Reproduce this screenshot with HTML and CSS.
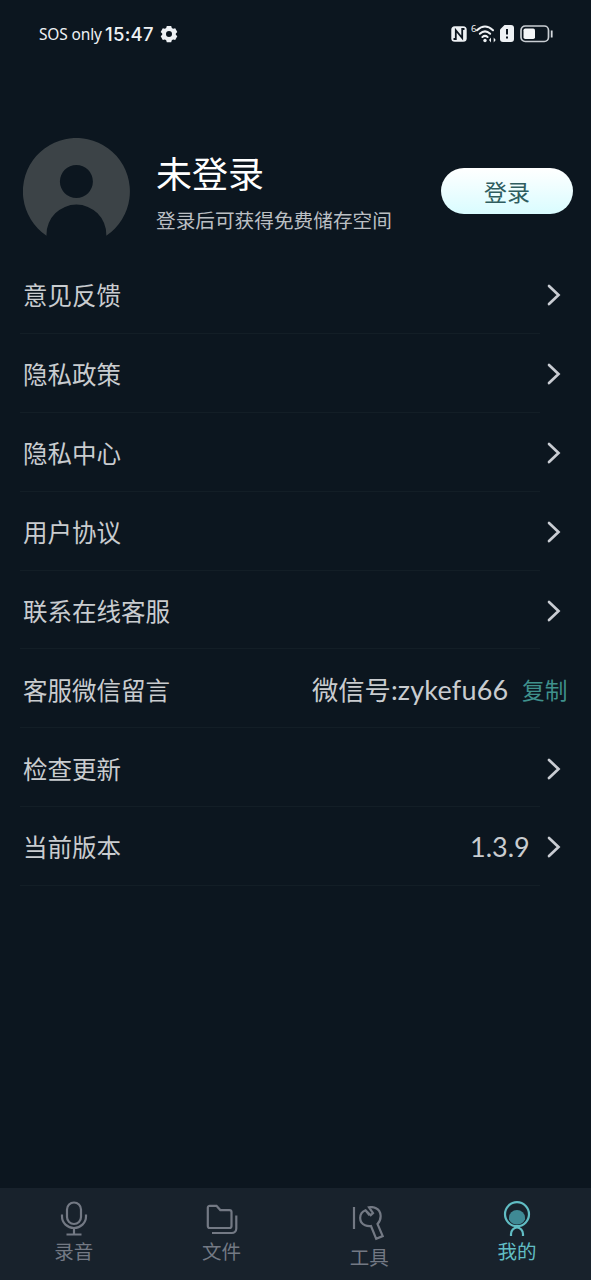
FILE: index.html
```html
<!DOCTYPE html>
<html lang="zh-CN">
<head>
<meta charset="utf-8">
<title>我的</title>
<link rel="stylesheet" href="styles.css">
</head>
<body>
<div class="app">
  <header class="status">
    <span class="carrier">SOS only</span>
    <span class="clock">15:47</span>
    <svg class="gear" width="18" height="18" viewBox="0 0 18 18"><path fill="#eef1f4" fill-rule="evenodd" d="M6.8 1h4.400l.6 2 1.300.8 2.100-.5 2.100 3.700-1.500 1.500v1.200l1.500 1.500-2.100 3.700-2.100-.5-1.300.8-.6 2H6.800l-.6-2-1.300-.8-2.100.5L.7 11.200l1.500-1.500V8.500L.7 7l2.100-3.700 2.100.5L6.200 3zM9 6a3 3 0 1 0 0 6 3 3 0 0 0 0-6z"/></svg>
    <div class="indicators">
      <svg class="nfc" width="16" height="16" viewBox="0 0 16 16"><rect x=".3" y=".3" width="15.400" height="15.400" rx="3.500" fill="#eef1f4"/><path d="M2.500 13h2.300V4.200l6.400 7.800V3h2.300" fill="none" stroke="#0c151e" stroke-width="1.800"/></svg>
      <span class="wifi-gen">6</span>
      <svg class="wifi" width="20" height="18" viewBox="0 0 20 18"><g fill="none" stroke="#eef1f4" stroke-width="2" stroke-linecap="round"><path d="M1 5.200Q9 -2.300 17 5.200"/><path d="M3.800 8.800Q9 4 14.200 8.800"/><path d="M6.400 12Q9 9.800 11.600 12"/></g><circle cx="9" cy="15.500" r="1.700" fill="#eef1f4"/><path d="M13 15l2-2.500v5zM19.700 15l-2-2.500v5z" fill="#eef1f4"/></svg>
      <svg class="sim" width="14" height="17" viewBox="0 0 14 17"><path d="M4.500 0H11a3 3 0 0 1 3 3v11a3 3 0 0 1-3 3H3a3 3 0 0 1-3-3V4.500z" fill="#eef1f4"/><path d="M7 4v5.500M7 11.500v2" stroke="#0c151e" stroke-width="2"/></svg>
      <svg class="battery" width="33" height="18" viewBox="0 0 33 18"><rect x="1" y="1" width="27.500" height="15.500" rx="4.200" fill="none" stroke="#c9ced3" stroke-width="1.700"/><rect x="3.500" y="3.500" width="11.500" height="10.500" rx="1.800" fill="#f4f6f8"/><path d="M31.700 5.500v7" stroke="#d6dade" stroke-width="1.800"/></svg>
    </div>
  </header>

  <section class="profile">
    <svg class="avatar" width="108" height="100" viewBox="0 0 108 100"><path fill="#3c4347" fill-rule="evenodd" d="M23.500 97.800A53.500 53.500 0 1 1 83.300 97.800V96.500a29.900 29.900 0 0 0-59.800 0zM53.400 27a16.500 16.500 0 1 0 0 33 16.500 16.500 0 0 0 0-33z"/></svg>
    <div class="identity">
      <h1 class="name">未登录</h1>
      <p class="hint">登录后可获得免费储存空间</p>
    </div>
    <button class="login">登录</button>
  </section>

  <main class="menu">
    <div class="row"><span class="label">意见反馈</span><svg class="chevron" viewBox="0 0 14 22"><path d="M2 2l9.500 9L2 20"/></svg></div>
    <div class="row"><span class="label">隐私政策</span><svg class="chevron" viewBox="0 0 14 22"><path d="M2 2l9.500 9L2 20"/></svg></div>
    <div class="row"><span class="label">隐私中心</span><svg class="chevron" viewBox="0 0 14 22"><path d="M2 2l9.500 9L2 20"/></svg></div>
    <div class="row"><span class="label">用户协议</span><svg class="chevron" viewBox="0 0 14 22"><path d="M2 2l9.500 9L2 20"/></svg></div>
    <div class="row"><span class="label">联系在线客服</span><svg class="chevron" viewBox="0 0 14 22"><path d="M2 2l9.500 9L2 20"/></svg></div>
    <div class="row row-contact"><span class="label">客服微信留言</span><span class="value">微信号<span class="account">:zykefu66</span></span><span class="copy">复制</span></div>
    <div class="row"><span class="label">检查更新</span><svg class="chevron" viewBox="0 0 14 22"><path d="M2 2l9.500 9L2 20"/></svg></div>
    <div class="row"><span class="label">当前版本</span><span class="version">1.3.9</span><svg class="chevron" viewBox="0 0 14 22"><path d="M2 2l9.500 9L2 20"/></svg></div>
  </main>

  <nav class="tabs">
    <a class="tab"><svg class="icon" width="36" height="36" viewBox="0 0 36 36"><rect x="11" y="2.500" width="14" height="21.500" rx="7"/><path d="M6 14.500v2a12 11.500 0 0 0 24 0v-2M18 28v6M10.500 34.500h15"/></svg><span>录音</span></a>
    <a class="tab"><svg class="icon" width="36" height="36" viewBox="0 0 36 36"><path d="M6 5.800h6.500l3.800 4.300H25.500a2 2 0 0 1 2 2V26a2 2 0 0 1-2 2H5.800a2 2 0 0 1-2-2V7.800a2 2 0 0 1 2.200-2zM32.300 15.500V28.500a4.500 4.500 0 0 1-4.500 4.500H8"/></svg><span>文件</span></a>
    <a class="tab tab-tools"><svg class="icon" width="36" height="36" viewBox="0 0 36 36"><path d="M3 1v22M18 1.300L22 7l-2.300 2.200-5.200-5C7.500 7 7.500 16.500 14 19.200c2 .9 4 1.100 6 .8l5.200 12.800 6.500-2.700L26.500 18C31.500 12.500 30 5 25.500 2.500 23.500 1.300 20.500.8 18 1.300zM14.500 4.200l4 5"/></svg><span>工具</span></a>
    <a class="tab tab-active"><svg class="icon" width="36" height="36" viewBox="0 0 36 36"><path class="face" d="M10 19.500v-2a8 7.500 0 0 1 16 0v2q-2.500 5-8 5t-8-5z"/><circle cx="18" cy="14.200" r="12"/><path d="M12 36v-2a6 6.500 0 0 1 12 0v2"/></svg><span>我的</span></a>
  </nav>
</div>
</body>
</html>
```
FILE: styles.css
```css
* { box-sizing: border-box; }
body {
  margin: 0;
  background: #0c161f;
  font-family: "Noto Sans CJK SC", sans-serif;
  color: #c9cccf;
}
.app {
  width: 591px;
  height: 1280px;
  display: flex;
  flex-direction: column;
  overflow: hidden;
}
.status {
  height: 67px;
  padding: 0 38px 0 39px;
  display: flex;
  align-items: center;
  color: #eef1f4;
  white-space: nowrap;
}
.carrier { width: 66px; font: 15.500px/20px "Noto Sans", sans-serif; letter-spacing: -.15px; }
.clock { width: 55px; font: 500 18.500px/20px Inter, sans-serif; letter-spacing: .3px; }
.indicators { margin-left: auto; display: flex; align-items: center; }
.wifi-gen { align-self: flex-start; width: 5px; margin-left: 4.500px; font: 9.500px/8px "Noto Sans", sans-serif; }
.sim { margin-left: 4px; }
.battery { margin-left: 6px; }
.profile {
  height: 188px;
  padding: 70px 18px 0 22.500px;
  display: flex;
  align-items: flex-start;
}
.avatar { flex: none; margin-top: 1px; }
.identity { margin-left: 25.500px; flex: 1; white-space: nowrap; }
.name { margin: 11px 0 0; font-size: 36px; line-height: 48px; font-weight: 400; color: #fff; }
.hint { margin: 11px 0 0; font-size: 19.670px; line-height: 26px; color: #bbbfc3; }
.login {
  flex: none;
  width: 132px;
  height: 46px;
  margin-top: 31px;
  padding: 0;
  border: 0;
  border-radius: 23px;
  background: linear-gradient(#fff, #d9fcff);
  color: #2f5d60;
  font: 23px/46px "Noto Sans CJK SC", sans-serif;
}
.menu { flex: 1; }
.row {
  height: 78.900px;
  margin-left: 20px;
  padding: 1.500px 30px 0 3px;
  display: flex;
  align-items: center;
  background: linear-gradient(#131e26, #131e26) left bottom / 520px 1px no-repeat;
  white-space: nowrap;
}
.label { margin-right: auto; font-size: 24.500px; line-height: 36px; }
.chevron { width: 14px; height: 22px; fill: none; stroke: #c9ccd2; stroke-width: 2.700; stroke-linecap: round; }
.row-contact { padding-right: 23.500px; }
.value { width: 197px; font-size: 26.300px; line-height: 36px; }
.account { font-family: Lato, sans-serif; font-size: 27px; letter-spacing: .2px; }
.copy { width: 45.500px; margin-left: 13px; font-size: 22.700px; line-height: 36px; color: #3f918c; }
.version { width: 60px; margin-right: 17px; font: 27px/36px Lato, sans-serif; }
.tabs {
  height: 92px;
  display: grid;
  grid-template-columns: repeat(4, 147.750px);
  background: #18222c;
}
.tab {
  padding-top: 12px;
  display: flex;
  flex-direction: column;
  align-items: center;
  font-size: 19.500px;
  line-height: 26px;
  color: #737984;
}
.tab span { margin-top: 2px; }
.icon { fill: none; stroke: currentColor; stroke-width: 2.200; }
.tab-tools { padding-top: 18px; }
.tab-active { color: #61bdc4; }
.face { fill: #3f8a95; stroke: none; }
```
